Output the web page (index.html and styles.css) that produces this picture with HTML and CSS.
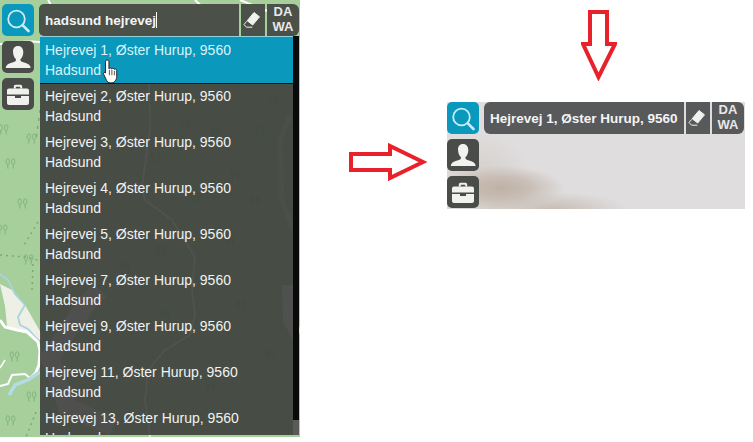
FILE: index.html
```html
<!DOCTYPE html>
<html lang="en">
<head>
    <meta charset="UTF-8">
    <title>Adressesøgning</title>
    <link rel="stylesheet" href="styles.css">
</head>
<body>
    <svg class="defs" width="0" height="0">
        <symbol id="i-search" viewBox="0 0 32 32">
            <circle cx="14.500" cy="15" r="8.300" fill="none" stroke="currentColor" stroke-width="1.800"/>
            <path d="M20.800 21.300l5.700 5.700" fill="none" stroke="currentColor" stroke-width="2.600" stroke-linecap="round"/>
        </symbol>
        <symbol id="i-person" viewBox="0 0 32 32">
            <path d="M16 5c3.400 0 5.300 2.600 5.300 6.200 0 2.800-1.100 5.300-2.500 6.600-.6.6-.5 1.900.3 2.500 1.500 1 6.400 2 8.200 3.600.9.800 1.300 2 1.300 3.100H3.800c0-1.100.4-2.300 1.300-3.100 1.800-1.600 6.700-2.600 8.200-3.600.8-.6.900-1.900.3-2.500-1.400-1.300-2.500-3.800-2.500-6.600C10.700 7.600 12.600 5 16 5z" fill="currentColor"/>
        </symbol>
        <symbol id="i-case" viewBox="0 0 32 32">
            <path d="M11.800 10.500V8.700c0-1.200.8-1.900 1.900-1.900h4.600c1.100 0 1.900.7 1.900 1.900v1.800h-2V8.800h-4.400v1.700z" fill="currentColor"/>
            <path d="M7 10.500h18c1.200 0 2 .8 2 2V16.500H5v-4c0-1.200.8-2 2-2z" fill="currentColor"/>
            <path d="M5 18h8v2h6v-2h8v7c0 1.200-.8 2-2 2H7c-1.200 0-2-.8-2-2z" fill="currentColor"/>
        </symbol>
        <symbol id="i-eraser" viewBox="0 0 24 32">
            <path d="M13 8.500l5.500 4.300-6.800 8.200-5.500-4.300z" fill="currentColor" stroke="currentColor" stroke-width="1" stroke-linejoin="round"/>
            <path d="M5.800 17.300L3 20.500l2.500 2.700h5.800" fill="none" stroke="currentColor" stroke-width="1"/>
        </symbol>
        <symbol id="tree" viewBox="0 0 11 11">
            <path d="M2.800 10.500V6.500M2.800 6.500C.6 6.500.6 .8 2.800 .8S5 6.500 2.800 6.500zM8.200 10.500V6.500M8.200 6.500C6 6.500 6 .8 8.200 .8S10.400 6.500 8.200 6.500z" fill="none" stroke="#7fb17c" stroke-width="1"/>
        </symbol>
    </svg>

    <main class="page">
        <section class="map-panel">
            <svg class="map" viewBox="0 0 300 437" preserveAspectRatio="none">
                <rect width="300" height="437" fill="#a6cf9b"/>
                <path d="M0 284l12 6 13 15 16 28v8l-13-9-11-2-10-4-2-20z" fill="#eef0e6"/>
                <path d="M0 274l8 6 7 14 10 11-7 12 2 8 8 4 10 11" fill="none" stroke="#a9d3dd" stroke-width="1.800"/>
                <path d="M0 320l5 7 12 3 10 2 11 10 2 9-1 14-3 7" fill="none" stroke="#fff" stroke-width="3"/>
                <path d="M0 386l8-2 4-9 13-1 5 4 6-6" fill="none" stroke="#fff" stroke-width="2"/>
                <path d="M0 368l5-8" fill="none" stroke="#fff" stroke-width="1.500"/>
                <path d="M9 395l6-10 13-5 12-8" fill="none" stroke="#b5dbe3" stroke-width="3.500"/>
                <path d="M0 44c14 0 24-4 40-2" fill="none" stroke="#fff" stroke-width="2"/>
                <path d="M48 0c4 6 4 10 12 14M195 0c6 6 12 10 18 12M240 0c10 4 20 8 30 12" fill="none" stroke="#fff" stroke-width="2"/>
                <path d="M38 222l-15 25M0 255l25 2 13 3M33 264l-1 26M36 412l-10 25" fill="none" stroke="#7fa872" stroke-width="1.500" stroke-dasharray="2 4"/>
                <path d="M40 110l-4 30" fill="none" stroke="#7fa872" stroke-width="1.500" stroke-dasharray="3 5"/>
                <path d="M100 290l-13 13-37 54 17 50 46 20" fill="none" stroke="#e3e3dd" stroke-width="18" opacity=".9"/>
                <path d="M147 37l3 76v17l-8 57 3 13 27 20 23 37-3 33 3 25-5 20-25 15-17 20-3 30 5 37" fill="none" stroke="#fff" stroke-width="1.500" opacity=".8"/>
                <path d="M290 115l-10 25 2 60 11 30" fill="none" stroke="#fff" stroke-width="5" opacity=".25"/>
                <path d="M288 285l1 35 8 15" fill="none" stroke="#fff" stroke-width="12" opacity=".6"/>
                <use href="#tree" x="5" y="158" width="11" height="11"/>
                <use href="#tree" x="17" y="198" width="11" height="11"/>
                <use href="#tree" x="-3" y="224" width="11" height="11"/>
                <use href="#tree" x="23" y="254" width="11" height="11"/>
                <use href="#tree" x="26" y="133" width="11" height="11"/>
                <use href="#tree" x="-2" y="124" width="11" height="11"/>
                <use href="#tree" x="9" y="351" width="11" height="11"/>
                <use href="#tree" x="26" y="391" width="11" height="11"/>
                <use href="#tree" x="5" y="415" width="11" height="11"/>
                <use href="#tree" x="268" y="96" width="11" height="11"/>
                <use href="#tree" x="180" y="120" width="11" height="11"/>
                <use href="#tree" x="210" y="128" width="11" height="11"/>
                <use href="#tree" x="255" y="125" width="11" height="11"/>
                <use href="#tree" x="150" y="152" width="11" height="11"/>
                <use href="#tree" x="230" y="170" width="11" height="11"/>
                <use href="#tree" x="190" y="192" width="11" height="11"/>
                <use href="#tree" x="250" y="195" width="11" height="11"/>
                <use href="#tree" x="225" y="235" width="11" height="11"/>
                <use href="#tree" x="155" y="245" width="11" height="11"/>
                <use href="#tree" x="120" y="262" width="11" height="11"/>
                <use href="#tree" x="160" y="310" width="11" height="11"/>
                <use href="#tree" x="235" y="300" width="11" height="11"/>
                <use href="#tree" x="265" y="350" width="11" height="11"/>
                <use href="#tree" x="205" y="380" width="11" height="11"/>
            </svg>
            <div class="widget widget-left">
                <div class="side-buttons">
                    <button class="square active"><svg class="icon"><use href="#i-search"/></svg></button>
                    <button class="square"><svg class="icon"><use href="#i-person"/></svg></button>
                    <button class="square"><svg class="icon"><use href="#i-case"/></svg></button>
                </div>
                <div class="search-col">
                    <div class="search-bar">
                        <div class="search-field">hadsund hejrevej<span class="caret"></span></div>
                        <button class="eraser"><svg class="eraser-icon"><use href="#i-eraser"/></svg></button>
                        <button class="dawa">DA<br>WA</button>
                    </div>
                    <div class="results">
                        <ul class="result-list">
                            <li class="selected">Hejrevej 1, Øster Hurup, 9560 Hadsund</li>
                            <li>Hejrevej 2, Øster Hurup, 9560 Hadsund</li>
                            <li>Hejrevej 3, Øster Hurup, 9560 Hadsund</li>
                            <li>Hejrevej 4, Øster Hurup, 9560 Hadsund</li>
                            <li>Hejrevej 5, Øster Hurup, 9560 Hadsund</li>
                            <li>Hejrevej 7, Øster Hurup, 9560 Hadsund</li>
                            <li>Hejrevej 9, Øster Hurup, 9560 Hadsund</li>
                            <li>Hejrevej 11, Øster Hurup, 9560 Hadsund</li>
                            <li>Hejrevej 13, Øster Hurup, 9560 Hadsund</li>
                        </ul>
                        <div class="scrollbar"></div>
                    </div>
                </div>
            </div>
            <!-- mouse pointer on top of first result -->
            <svg class="hand" viewBox="0 0 16 24">
                <path d="M4.500 1c1 0 1.600.7 1.600 1.700V9c.3-1 2.300-1 2.500.2.400-.9 2.200-.8 2.400.4.500-.7 2.300-.5 2.300 1v5.400c0 2.800-1.800 6-4.700 6H7.500c-1.800 0-2.900-1-3.700-2.400L1.200 14c-.7-1.200 1-2.300 2-1.200l-.3-.1V2.700C2.900 1.700 3.500 1 4.500 1z" fill="#fff" stroke="#222" stroke-width=".9"/>
                <path d="M6.500 10v5M8.800 10v5M11.100 11v4" stroke="#222" stroke-width=".7"/>
            </svg>
        </section>

        <section class="result-panel">
            <svg class="arrow arrow-down" viewBox="0 0 36 71">
                <path d="M9 2h17v32h8L17.500 67 2 34h7z" fill="#fff" stroke="#e8212b" stroke-width="4"/>
            </svg>
            <svg class="arrow arrow-right" viewBox="0 0 78 38">
                <path d="M2 11h39V3l33 16-33 16v-8H2z" fill="#fff" stroke="#e8212b" stroke-width="4"/>
            </svg>
            <div class="widget widget-right">
                <div class="side-buttons">
                    <button class="square active"><svg class="icon"><use href="#i-search"/></svg></button>
                    <button class="square"><svg class="icon"><use href="#i-person"/></svg></button>
                    <button class="square"><svg class="icon"><use href="#i-case"/></svg></button>
                </div>
                <div class="search-col">
                    <div class="search-bar">
                        <div class="search-field">Hejrevej 1, Øster Hurup, 9560</div>
                        <button class="eraser"><svg class="eraser-icon"><use href="#i-eraser"/></svg></button>
                        <button class="dawa">DA<br>WA</button>
                    </div>
                </div>
            </div>
        </section>
    </main>
</body>
</html>
```

FILE: styles.css
```css
html, body {
    margin: 0;
    padding: 0;
    background-color: #fff;
    overflow: hidden;
}

body {
    font-family: "Liberation Sans", Arial, sans-serif;
}

.defs {
    display: block;
    height: 0;
}

.page {
    display: flex;
    width: 753px;
    height: 442px;
}

/* left: map with open result list */
.map-panel {
    position: relative;
    width: 300px;
    height: 437px;
    overflow: hidden;
    flex: none;
}

.map {
    position: absolute;
    inset: 0;
    width: 100%;
    height: 100%;
}

.widget {
    position: relative;
    display: flex;
}

.widget-left {
    height: 100%;
    padding: 4px 1px 0 2px;
    box-sizing: border-box;
    gap: 5px;
}

.side-buttons {
    display: flex;
    flex-direction: column;
    gap: 5px;
    flex: none;
    width: 32px;
}

.square {
    width: 32px;
    height: 32px;
    padding: 0;
    border: none;
    border-radius: 5px;
    background-color: #4a4c49;
    color: #f1f1ee;
}

.square.active {
    background-color: #0a98bd;
    color: #c9eef5;
}

.icon {
    display: block;
    width: 32px;
    height: 32px;
}

.search-col {
    flex: 1;
    min-width: 0;
}

.search-bar {
    display: flex;
    height: 32px;
    gap: 2px;
}

.search-field {
    flex: 1;
    display: flex;
    align-items: center;
    padding-left: 6px;
    border-radius: 5px 0 0 5px;
    background-color: #4b5049;
    color: #f4f4f4;
    font-size: 13.5px;
    font-weight: bold;
}

.caret {
    width: 1px;
    height: 16px;
    background-color: #fff;
}

.eraser {
    width: 24px;
    padding: 0;
    border: none;
    background-color: #4b5049;
    color: #f1f1ee;
}

.eraser-icon {
    display: block;
    width: 24px;
    height: 32px;
}

.dawa {
    width: 32px;
    padding: 0 0 2px;
    border: none;
    border-radius: 0 6px 6px 0;
    background-color: #4b5049;
    color: #e8e8e8;
    font-family: inherit;
    font-size: 13px;
    font-weight: bold;
    line-height: 15px;
}

.results {
    display: flex;
    height: 399px;
    margin-left: 1px;
    overflow: hidden;
}

.result-list {
    flex: 1;
    margin: 0;
    padding: 0;
    list-style: none;
    border-top: 1px solid #8fd0df;
    background-color: rgba(54, 54, 54, 0.85);
    color: #f2f2f2;
    font-size: 14px;
    line-height: 20px;
}

.result-list li {
    height: 46px;
    padding: 3px 8px 0 5px;
    box-sizing: border-box;
}

.result-list li.selected {
    background-color: #0a98bd;
    box-shadow: 0 1px 0 #111;
    color: #d8f4fa;
}

.scrollbar {
    width: 6px;
    background-image: linear-gradient(#0a0a0a 384px, #5a5b58 384px);
}

.hand {
    position: absolute;
    left: 102px;
    top: 59px;
    width: 18px;
    height: 26px;
}

/* right: the finished widget on a blurred map */
.result-panel {
    position: relative;
    flex: 1;
}

.arrow {
    position: absolute;
}

.arrow-down {
    left: 281px;
    top: 10px;
    width: 36px;
    height: 71px;
}

.arrow-right {
    left: 49px;
    top: 143px;
    width: 78px;
    height: 38px;
}

.widget-right {
    position: absolute;
    left: 147px;
    top: 102px;
    width: 298px;
    height: 107px;
    gap: 5px;
    background-color: #dfdddd;
    background-image:
        radial-gradient(ellipse 62px 22px at 55px 86px, #bfb1a5 0%, rgba(196, 183, 172, 0.75) 50%, rgba(223, 221, 221, 0) 100%),
        radial-gradient(ellipse 75px 18px at 105px 108px, #c6bcb3 0%, rgba(223, 221, 221, 0) 100%),
        radial-gradient(ellipse 50px 55px at 35px 85px, rgba(205, 197, 190, 0.7) 0%, rgba(223, 221, 221, 0) 100%);
}

.widget-right .search-col {
    padding-right: 1px;
}

.widget-right .search-field,
.widget-right .eraser,
.widget-right .dawa {
    background-color: #58595b;
}

.widget-right .search-field {
    border-radius: 6px 0 0 6px;
}
```
